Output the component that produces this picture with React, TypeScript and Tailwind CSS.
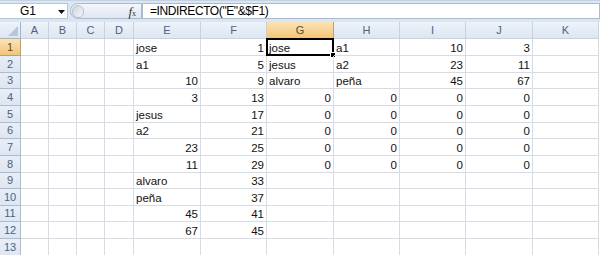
import { FC } from "react";

type Val = string | number | null;

const cols = ["A", "B", "C", "D", "E", "F", "G", "H", "I", "J", "K"];
const rowHeights = ["h-[17px]", "h-[17px]", "h-[16px]", "h-[17px]", "h-[17px]", "h-[16px]", "h-[17px]", "h-[17px]", "h-[16px]", "h-[17px]", "h-[16px]", "h-[17px]", "h-[17px]"];

// values for columns E..J, row by row
const data: Val[][] = [
  ["jose", 1, "jose", "a1", 10, 3],
  ["a1", 5, "jesus", "a2", 23, 11],
  [10, 9, "alvaro", "peña", 45, 67],
  [3, 13, 0, 0, 0, 0],
  ["jesus", 17, 0, 0, 0, 0],
  ["a2", 21, 0, 0, 0, 0],
  [23, 25, 0, 0, 0, 0],
  [11, 29, 0, 0, 0, 0],
  ["alvaro", 33, null, null, null, null],
  ["peña", 37, null, null, null, null],
  [45, 41, null, null, null, null],
  [67, 45, null, null, null, null],
  [null, null, null, null, null, null],
];

const FormulaBar: FC = () => {
  return (
    <div className="flex h-[22px] bg-[#dce6f2] pt-[2px] pb-[3px] border-t border-[#c3d2e5]">
      <div className="relative flex items-center w-[68px] bg-white border-y border-r border-[#b5c6db] text-[12px] text-black pl-[20px]">
        G1
        <svg className="absolute left-[58px] top-[6px]" width="7" height="4" viewBox="0 0 7 4">
          <path d="M0 0 L7 0 L3.5 4 Z" fill="#111" />
        </svg>
      </div>
      <div className="flex items-center w-[72px] ml-[2px] rounded-l-full border border-[#a9bbd1] bg-gradient-to-b from-[#f4f7fb] to-[#dfe7f1]">
        <div className="w-[12px] h-[13px] ml-[1px] rounded-full bg-gradient-to-br from-[#cfd6df] to-[#f5f7fa] border border-[#b8c2cf]" />
        <div className="flex-1" />
        <span className="mr-[5px] text-[13px] italic text-[#333] font-['Liberation_Serif',serif] leading-none">
          f<span className="text-[8px] not-italic">x</span>
        </span>
      </div>
      <div className="flex items-center flex-1 bg-white border border-[#a9bbd1] pl-[7px] text-[12px] tracking-[-0.4px] text-black">
        =INDIRECTO("E"&amp;$F1)
      </div>
    </div>
  );
};

const Cell: FC<{ v: Val; active?: boolean }> = ({ v, active }) => {
  const num = typeof v === "number";
  return (
    <div
      className={
        "relative flex items-end border-r border-b border-[#d6dce6] pb-[1px] px-[2px] leading-none " +
        (num ? "justify-end" : "justify-start")
      }
    >
      {v !== null && <span>{v}</span>}
      {active && (
        <div className="absolute -left-[1px] -top-[1px] -right-[1px] -bottom-[1px] border-2 border-black">
          <div className="absolute -right-[4px] -bottom-[4px] w-[6px] h-[6px] bg-black border border-white" />
        </div>
      )}
    </div>
  );
};

const App: FC = () => {
  return (
    <div className="w-[600px] h-[255px] overflow-hidden bg-white font-['Liberation_Sans',Arial,sans-serif]">
      <FormulaBar />
      <div className="grid grid-cols-[21px_28px_28px_28px_29px_67px_66px_67px_66px_66px_67px_66px] text-[11.5px] text-[#111]">
        {/* header row */}
        <div className="h-[17px] relative bg-gradient-to-b from-[#eef3fa] to-[#dde6f2] border-r border-b border-[#9eb6ce]">
          <svg className="absolute right-[2px] bottom-[2px]" width="10" height="10" viewBox="0 0 10 10">
            <path d="M10 0 L10 10 L0 10 Z" fill="#b7c6da" />
          </svg>
        </div>
        {cols.map((c) => (
          <div
            key={c}
            className={
              "h-[17px] flex items-center justify-center border-r border-b text-[11px] " +
              (c === "G"
                ? "bg-gradient-to-b from-[#fae3b8] to-[#f3c576] border-[#c2a064] text-[#5a4a2c]"
                : "bg-gradient-to-b from-[#eef3fa] to-[#dde6f2] border-[#c5d2e3] text-[#4e627c]")
            }
          >
            {c}
          </div>
        ))}
        {data.map((row, r) => {
          const vals: Val[] = [null, null, null, null, ...row, null];
          return [
            <div
              key={"h" + r}
              className={
                rowHeights[r] +
                " flex items-center justify-center border-r border-b text-[11px] " +
                (r === 0
                  ? "bg-gradient-to-b from-[#fae3b8] to-[#f3c576] border-[#c2a064] text-[#5a4a2c]"
                  : "bg-gradient-to-b from-[#e8eef7] to-[#dde6f2] border-[#a8bdd4] text-[#4e627c]")
              }
            >
              {r + 1}
            </div>,
            ...vals.map((v, c) => <Cell key={r + "-" + c} v={v} active={r === 0 && c === 6} />),
          ];
        })}
      </div>
    </div>
  );
};

export default App;
